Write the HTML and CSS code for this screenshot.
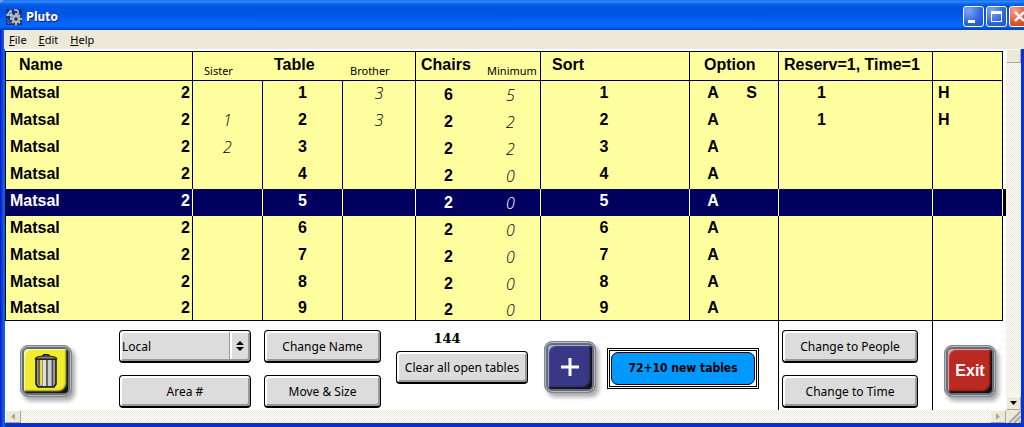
FILE: index.html
```html
<!DOCTYPE html>
<html lang="en">
<head>
<meta charset="utf-8">
<title>Pluto</title>
<link rel="stylesheet" href="styles.css">
</head>
<body>
<div class="window">
  <header class="titlebar">
    <svg class="app-icon" viewBox="0 0 16 16" aria-hidden="true">
      <rect width="16" height="16" fill="#17347c"/>
      <path d="M5 1L1 6h6M5 1v8M8 1h2c3 0 3 5 0 5H9" fill="none" stroke="#b9cdf0" stroke-width="1.300"/>
      <path d="M10 4v12M4 10h12M6 6l8 8M14 6l-8 8" stroke="#b8b8b0" stroke-width="2"/>
      <circle cx="10" cy="10" r="3" fill="#17347c" stroke="#b8b8b0" stroke-width="2.400"/>
      <path d="M1 10l4 5M1 13l2 2" stroke="#5a79c0"/>
    </svg>
    <h1 class="title">Pluto</h1>
    <div class="window-buttons">
      <button class="wbtn" aria-label="Minimize"><svg viewBox="0 0 19 19"><path d="M4 13h7v3H4z" fill="#fff"/></svg></button>
      <button class="wbtn" aria-label="Maximize"><svg viewBox="0 0 19 19"><path d="M4 4h11v11H4zM5 7v7h9V7z" fill="#fff" fill-rule="evenodd"/></svg></button>
      <button class="wbtn wbtn-close" aria-label="Close"><svg viewBox="0 0 19 19"><path d="M5 5l9 9M14 5l-9 9" stroke="#fff" stroke-width="2.400"/></svg></button>
    </div>
  </header>
  <nav class="menubar">
    <button class="menu"><u>F</u>ile</button>
    <button class="menu"><u>E</u>dit</button>
    <button class="menu"><u>H</u>elp</button>
  </nav>
  <div class="client">
    <main class="content">
      <table class="grid">
        <colgroup>
          <col class="c-name"><col class="c-area"><col class="c-sister"><col class="c-table"><col class="c-brother"><col class="c-chairs"><col class="c-min"><col class="c-sort"><col class="c-opt"><col class="c-flag"><col class="c-res"><col class="c-last">
        </colgroup>
        <thead>
          <tr>
            <th class="h-name line" colspan="2">Name</th>
            <th class="h-small h-sister">Sister</th>
            <th class="h-table">Table</th>
            <th class="h-small h-brother line">Brother</th>
            <th class="h-chairs">Chairs</th>
            <th class="h-small h-min line">Minimum</th>
            <th class="h-sort line">Sort</th>
            <th class="h-option line" colspan="2">Option</th>
            <th class="h-res line">Reserv=1, Time=1</th>
            <th class="line"></th>
          </tr>
        </thead>
        <tbody>
          <tr><td>Matsal</td><td>2</td><td></td><td>1</td><td>3</td><td>6</td><td>5</td><td>1</td><td>A</td><td>S</td><td>1</td><td>H</td></tr>
          <tr><td>Matsal</td><td>2</td><td>1</td><td>2</td><td>3</td><td>2</td><td>2</td><td>2</td><td>A</td><td></td><td>1</td><td>H</td></tr>
          <tr><td>Matsal</td><td>2</td><td>2</td><td>3</td><td></td><td>2</td><td>2</td><td>3</td><td>A</td><td></td><td></td><td></td></tr>
          <tr><td>Matsal</td><td>2</td><td></td><td>4</td><td></td><td>2</td><td>0</td><td>4</td><td>A</td><td></td><td></td><td></td></tr>
          <tr class="selected"><td>Matsal</td><td>2</td><td></td><td>5</td><td></td><td>2</td><td>0</td><td>5</td><td>A</td><td></td><td></td><td></td></tr>
          <tr><td>Matsal</td><td>2</td><td></td><td>6</td><td></td><td>2</td><td>0</td><td>6</td><td>A</td><td></td><td></td><td></td></tr>
          <tr><td>Matsal</td><td>2</td><td></td><td>7</td><td></td><td>2</td><td>0</td><td>7</td><td>A</td><td></td><td></td><td></td></tr>
          <tr><td>Matsal</td><td>2</td><td></td><td>8</td><td></td><td>2</td><td>0</td><td>8</td><td>A</td><td></td><td></td><td></td></tr>
          <tr><td>Matsal</td><td>2</td><td></td><td>9</td><td></td><td>2</td><td>0</td><td>9</td><td>A</td><td></td><td></td><td></td></tr>
        </tbody>
      </table>
      <div class="actions">
        <div class="panel panel-main">
          <button class="tile tile-yellow" aria-label="Delete">
            <svg viewBox="0 0 24 34" width="24" height="34" aria-hidden="true">
              <path d="M2 5h20v25l-2 3H4l-2-3z" fill="#999" stroke="#111" stroke-width="1.500"/>
              <path d="M4 6h2v25H4z" fill="#666"/><path d="M6 6h2v25H6z" fill="#e9df20"/><path d="M9 6h3v26H9z" fill="#ddd"/><path d="M12 6h2v26h-2z" fill="#666"/><path d="M14 6h3v26h-3z" fill="#ccc"/><path d="M18 6h1v26h-1z" fill="#444"/>
              <path d="M1 5c0-2 5-3 11-3s11 1 11 3z" fill="#888" stroke="#111"/><path d="M9 2c0-2 6-2 6 0" fill="none" stroke="#111" stroke-width="1.500"/>
            </svg>
          </button>
          <div class="stack stack-wide">
            <div class="select-box">
              <select class="select" aria-label="Area type"><option>Local</option></select>
              <span class="select-arrows"><svg viewBox="0 0 8 10" width="8" height="10" aria-hidden="true"><path d="M4 0l4 4H0zM4 10l4-4H0z"/></svg></span>
            </div>
            <button class="btn">Area #</button>
          </div>
          <div class="stack stack-mid">
            <button class="btn">Change Name</button>
            <button class="btn">Move &amp; Size</button>
          </div>
          <div class="clear">
            <span class="count">144</span>
            <button class="btn">Clear all open tables</button>
          </div>
          <button class="tile tile-blue" aria-label="Add">
            <svg viewBox="0 0 18 18" width="18" height="18" aria-hidden="true"><path d="M9 0v18M0 9h18" stroke="#fff" stroke-width="3"/></svg>
          </button>
          <div class="default-frame"><div class="default-inner"><button class="btn-default">72+10 new tables</button></div></div>
        </div>
        <div class="panel panel-change">
          <div class="stack">
            <button class="btn">Change to People</button>
            <button class="btn">Change to Time</button>
          </div>
        </div>
        <div class="panel panel-exit"><button class="tile tile-red">Exit</button></div>
      </div>
    </main>
    <div class="vscroll">
      <span class="thumb"></span>
      <button class="sbtn" aria-label="Scroll down"><svg viewBox="0 0 7 4" width="7" height="4"><path d="M0 0h7L3.500 4z"/></svg></button>
    </div>
    <div class="hscroll">
      <button class="sbtn" aria-label="Scroll left"><svg viewBox="0 0 4 7" width="4" height="7"><path d="M4 0v7L0 3.500z" fill="#aca899"/></svg></button>
      <button class="sbtn" aria-label="Scroll right"><svg viewBox="0 0 4 7" width="4" height="7"><path d="M0 0v7l4-3.500z" fill="#aca899"/></svg></button>
    </div>
    <div class="grip"><svg viewBox="0 0 15 13" width="15" height="13" aria-hidden="true"><path d="M3 13L15 1M8 13l7-7M13 13l2-2" stroke="#aca899" stroke-width="2"/></svg></div>
  </div>
</div>
</body>
</html>
```
FILE: styles.css
```css
* { box-sizing: border-box; }
body { margin: 0; background: #7b9ae0; overflow: hidden; font-family: "Noto Sans", sans-serif; color: #000; }
button, select { font: inherit; color: inherit; margin: 0; padding: 0; }

.window {
  display: flex; flex-direction: column; min-height: 100vh; overflow: hidden;
  background: linear-gradient(90deg, #0019cf 0, #0019cf 1px, #0831d9 1px, #0855dd 3px, #166aee 4px, #0855dd 5px, #0831d9 6px);
  border-radius: 6px 0 0 0;
}
.titlebar {
  display: flex; align-items: center; height: 30px; padding: 3px 0 0 6px;
  background: linear-gradient(#0058e6 0, #3a93ff 1px, #1470f2 3px, #0055e0 6px, #0054e3 14px, #0463f8 22px, #0668ff 26px, #0048cc 29px, #003dbc 30px);
}
.app-icon { width: 16px; height: 16px; }
.title { flex: 1; margin: 0 0 0 4px; font: bold 12px/16px "DejaVu Sans Condensed", sans-serif; color: #fff; text-shadow: 1px 1px 0 #0a1883; }
.window-buttons { display: flex; gap: 2px; margin-right: -6px; }
.wbtn { width: 21px; height: 21px; border: 1px solid #fff; border-radius: 3px; background: radial-gradient(circle at 25% 20%, #7ea6f5, #2f62e0 60%, #2052cc); }
.wbtn svg { display: block; width: 19px; height: 19px; }
.wbtn-close { background: radial-gradient(circle at 25% 20%, #f0a088, #e0532c 60%, #c83c14); }

.menubar { display: flex; gap: 12px; height: 19px; margin: 0 0 0 4px; padding-left: 5px; background: #ece9d8; }
.menu { border: 0; background: none; font-size: 11px; line-height: 18px; }

.client {
  flex: 1; display: grid; grid-template-columns: 1fr 15px; grid-template-rows: 1fr 13px;
  margin: 0 3px 0 5px; border-bottom: 4px solid #0831c9; background: #fff;
}
.content { display: flex; flex-direction: column; padding: 2px 3px 0 0; }

.grid { width: 100%; table-layout: fixed; border-collapse: separate; border-spacing: 0; background: #ffff9f; border-left: 1px solid #000; font: bold 16px/19px "Liberation Sans", sans-serif; }
.c-name { width: 145px; } .c-area { width: 42px; } .c-sister { width: 70px; } .c-table { width: 80px; }
.c-brother { width: 73px; } .c-chairs { width: 65px; } .c-min { width: 60px; } .c-sort { width: 149px; }
.c-opt { width: 46px; } .c-flag { width: 43px; } .c-res { width: 154px; } .c-last { width: 70px; }

.grid th { height: 30px; padding: 3px 0 0; border: 0 solid #000; border-width: 1px 0; text-align: left; vertical-align: top; white-space: nowrap; }
.grid th.line { border-right-width: 1px; }
.grid th.h-small { padding-top: 11px; font: 11px/16px "Noto Sans", sans-serif; }
.grid .h-name { padding-left: 13px; }
.grid .h-sister, .grid .h-table { padding-left: 11px; }
.grid .h-brother { padding-left: 7px; }
.grid .h-chairs, .grid .h-res { padding-left: 5px; }
.grid .h-min { padding-left: 6px; }
.grid .h-sort { padding-left: 11px; }
.grid .h-option { padding-left: 14px; }

.grid td { height: 27px; padding: 2px 0 0; text-align: center; vertical-align: top; border: 0 solid #000; border-right-width: 1px; }
.grid td:nth-child(1) { padding-left: 4px; text-align: left; border-right: 0; }
.grid td:nth-child(2) { padding-right: 2px; text-align: right; }
.grid td:nth-child(3), .grid td:nth-child(5), .grid td:nth-child(7) { font: italic 300 16px/20px "Open Sans", "Noto Sans", sans-serif; }
.grid td:nth-child(6), .grid td:nth-child(9) { border-right: 0; }
.grid td:nth-child(6), .grid td:nth-child(7) { padding-top: 4px; }
.grid td:nth-child(8) { padding-right: 22px; }
.grid td:nth-child(10) { padding-right: 11px; }
.grid td:nth-child(11) { padding-right: 68px; }
.grid td:nth-child(12) { padding-left: 5px; text-align: left; }
.grid tr:last-child td { height: 24px; line-height: 18px; border-bottom-width: 1px; border-bottom-style: solid; border-bottom-color: #000; }
.grid .selected td { background: #00005f; color: #fff; border-color: #fff; }
.grid .selected td:last-child { box-shadow: 3px 0 0 #000; }

.actions { flex: 1; display: grid; grid-template-columns: 774fr 154fr 70fr; }
.panel { display: flex; align-items: flex-start; }
.panel-main { padding: 9px 19px 0 15px; border-right: 1px solid #000; }
.panel-change { padding: 9px 14px 0 3px; border-right: 1px solid #000; }
.panel-exit { padding: 24px 0 0 11px; }
.stack { display: grid; gap: 12px; flex: 1; }
.stack-wide { flex: 132; margin-left: 47px; }
.stack-mid { flex: 117; margin-left: 13px; }
.clear { flex: 132; display: grid; margin: 0 16px 0 15px; }
.count { height: 21px; padding-right: 30px; text-align: center; font: bold 13px/18px "DejaVu Serif", serif; }

.btn, .select-box {
  width: 100%; height: 33px; border: 1px solid #000; border-radius: 4px; border-bottom-width: 2px;
  background: #dcdcdc; box-shadow: inset 2px 2px 0 #fff, inset -2px -2px 0 #999; font-size: 12px; white-space: nowrap;
}
.select-box { position: relative; overflow: hidden; }
.select { width: 100%; height: 100%; padding-left: 2px; appearance: none; border: 0; background: none; font-size: 12px; }
.select-arrows { position: absolute; top: 1px; right: 2px; bottom: 2px; display: grid; place-items: center; width: 18px; border-left: 2px solid #fff; box-shadow: -1px 0 0 #999; pointer-events: none; }

.tile {
  flex: none; display: grid; place-items: center; width: 52px; height: 52px; border: 1px solid #80848e; border-radius: 8px;
  box-shadow: inset 0 0 0 1px #b4bac4, inset 0 0 0 3px #686c78, inset 4px 4px 1px 0 #fff9, inset -6px -6px 2px -1px #111, 3px 4px 4px #0005;
}
.tile-yellow { margin-top: 15px; background: #f2ec30; }
.tile-blue { margin-top: 11px; background: #383887; }
.tile-red { background: #b92a22; color: #fff; font: bold 16px/20px "Liberation Sans", sans-serif; }
.default-frame { flex: 148; margin: 18px 0 0 11px; padding: 1px; border: 1px solid #000; }
.default-inner { padding: 1px; border: 1px solid #000; }
.btn-default { display: block; width: 100%; height: 33px; border: 1px solid #000; border-radius: 7px; background: #0099ff; font: bold 12px/29px "DejaVu Sans Condensed", sans-serif; white-space: nowrap; }

.vscroll, .hscroll { display: flex; justify-content: space-between; background: repeating-conic-gradient(#ece9d8 0 25%, #fff 0 50%) 0 0 / 2px 2px; }
.vscroll { flex-direction: column; }
.thumb, .sbtn, .grip { display: grid; place-items: center; background: #ece9d8; border: 1px solid #fff; border-color: #fff #aca899 #aca899 #fff; }
.thumb, .vscroll .sbtn { height: 14px; width: 15px; }
.hscroll .sbtn { width: 16px; height: 13px; }
.grip { border: 0; }
```
